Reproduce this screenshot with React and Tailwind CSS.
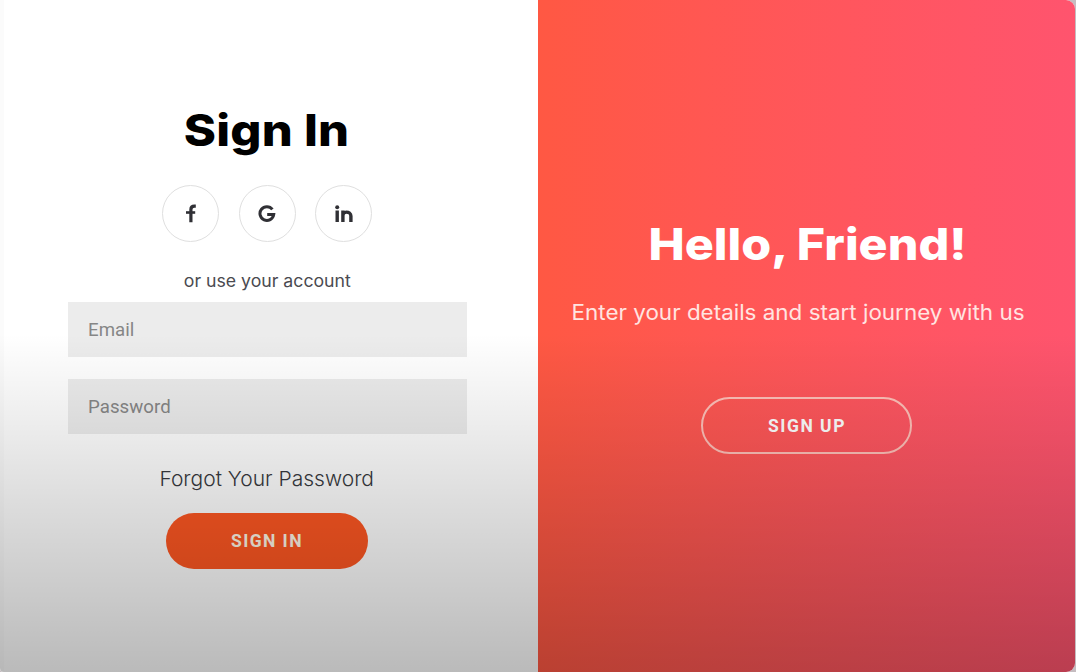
function SocialLink({ label, children }) {
  return (
    <a
      href="#"
      aria-label={label}
      className="flex size-[57px] items-center justify-center rounded-full border-[1.5px] border-[#dfdfdf] text-[#303035]"
    >
      {children}
    </a>
  );
}

function FacebookIcon() {
  return (
    <svg viewBox="0 0 12 18" className="h-[19px] w-3" fill="none" stroke="currentColor">
      <path d="M10.8 1.6H9.4C7 1.6 5.9 2.7 5.9 4.9V17.8" strokeWidth="3.2" />
      <path d="M1 8h9.2" strokeWidth="2.6" />
    </svg>
  );
}

function GoogleIcon() {
  return (
    <svg viewBox="0 0 18 18" className="size-[18px]" fill="none" stroke="currentColor" strokeWidth="3">
      <path d="M14.4 4.4A6.9 6.9 0 1 0 15.7 9.6H9.2" />
    </svg>
  );
}

function LinkedInIcon() {
  return (
    <svg viewBox="0 0 18 18" className="size-[18px]" fill="none" stroke="currentColor" strokeWidth="3.4">
      <circle cx="2.2" cy="2.2" r="2" fill="currentColor" stroke="none" />
      <path d="M2.2 5.6v11.4M7.9 5.6v11.4M7.9 11c0-2.4 1.2-3.9 3.5-3.9s4.5 1.2 4.5 4v5.9" />
    </svg>
  );
}

function Field({ type, placeholder }) {
  return (
    <input
      type={type}
      placeholder={placeholder}
      className="block h-[55px] w-[399px] bg-[#ececec] px-[20.5px] font-['Roboto',sans-serif] text-[18.67px] tracking-[0.05px] text-[#303030] outline-none placeholder:text-[#868686]"
    />
  );
}

export default function App() {
  return (
    <div className="h-[672px] w-[1076px] overflow-hidden bg-[#c5bcc0]">
      <main className="relative flex h-[672px] w-[1075px] overflow-hidden rounded-bl-[4px] rounded-r-[9px] bg-white font-['Inter',sans-serif]">
        <form className="flex w-[538px] flex-col items-center border-l-4 border-[#fbfbfb] pr-[8px] pt-[100px]">
          <h1 className="h-[60px] scale-x-[1.11] whitespace-nowrap text-[44px] font-extrabold leading-[60px] tracking-[0.2px] text-black">
            Sign In
          </h1>
          <div className="mt-[25px] flex gap-[19.5px]">
            <SocialLink label="Facebook">
              <FacebookIcon />
            </SocialLink>
            <SocialLink label="Google">
              <GoogleIcon />
            </SocialLink>
            <SocialLink label="LinkedIn">
              <LinkedInIcon />
            </SocialLink>
          </div>
          <span className="mt-[27px] h-6 scale-x-[1.04] whitespace-nowrap text-[17px] font-normal leading-6 text-[#4a4a50]">
            or use your account
          </span>
          <div className="mt-[9px] flex flex-col gap-[22px]">
            <Field type="email" placeholder="Email" />
            <Field type="password" placeholder="Password" />
          </div>
          <a
            href="#"
            className="mt-[31px] h-7 scale-x-[1.025] whitespace-nowrap text-[20.5px] font-light leading-7 text-[#383a40]"
          >
            Forgot Your Password
          </a>
          <button
            type="button"
            className="mt-5 h-14 w-[202px] rounded-full bg-[#ff5722] font-['Roboto',sans-serif] text-[17.5px] font-bold tracking-[1.4px] text-[#fff8e8]"
          >
            SIGN IN
          </button>
        </form>
        <section className="flex w-[537px] flex-col items-center bg-linear-to-r from-[#ff5843] to-[#ff546e] pt-[214px] text-white">
          <h2 className="ml-[2px] h-[60px] scale-x-[1.1] whitespace-nowrap text-[44px] font-extrabold leading-[60px]">
            Hello, Friend!
          </h2>
          <p className="mr-4 mt-[25px] h-7 scale-x-[1.068] whitespace-nowrap text-[21px] font-normal leading-7 text-[#ffe4e1]">
            Enter your details and start journey with us
          </p>
          <button
            type="button"
            className="mt-[70px] h-[57px] w-[211px] rounded-full border-2 border-[#ffc0b8] pl-px pt-px font-['Roboto',sans-serif] text-[17.5px] font-bold tracking-[1.5px] text-white"
          >
            SIGN UP
          </button>
        </section>
        <div className="pointer-events-none absolute inset-x-0 bottom-0 h-[338px] bg-linear-to-b from-black/0 to-black/27" />
      </main>
    </div>
  );
}
